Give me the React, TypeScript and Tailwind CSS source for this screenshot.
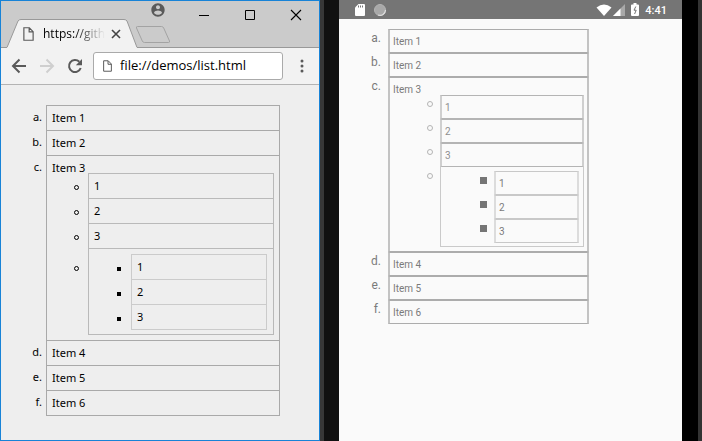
import type { ReactNode } from "react";

type Entry = { marker: string; label: string };

const before: Entry[] = [
  { marker: "a.", label: "Item 1" },
  { marker: "b.", label: "Item 2" },
];
const after: Entry[] = [
  { marker: "d.", label: "Item 4" },
  { marker: "e.", label: "Item 5" },
  { marker: "f.", label: "Item 6" },
];
const numbers = ["1", "2", "3"];

function PageIcon({ className }: { className: string }) {
  return (
    <svg viewBox="0 0 10 13" className={className} fill="none" stroke="#5a5a5a" strokeWidth="1.1">
      <path d="M.7.7h5.1l3.5 3.6v8H.7zM5.6.9v3.7h3.6" />
    </svg>
  );
}

function WindowButton({ label, top, children }: { label: string; top: string; children: ReactNode }) {
  return (
    <button type="button" aria-label={label} className={`flex w-[46px] justify-center ${top}`}>
      {children}
    </button>
  );
}

function TitleBar() {
  return (
    <header className="h-[47px] border-b border-[#999] bg-[#cbcbcb]">
      <div className="flex h-6 items-start justify-end">
        <WindowButton label="Profile" top="pt-px">
          <svg viewBox="0 0 24 24" className="size-4" fill="#5a5a5a">
            <path d="M12 2C6.48 2 2 6.48 2 12s4.480 10 10 10 10-4.480 10-10S17.520 2 12 2zm0 3c1.660 0 3 1.340 3 3s-1.340 3-3 3-3-1.340-3-3 1.340-3 3-3zm0 14.200c-2.500 0-4.710-1.280-6-3.220.03-1.990 4-3.080 6-3.080 1.990 0 5.970 1.090 6 3.080-1.290 1.940-3.500 3.220-6 3.220z" />
          </svg>
        </WindowButton>
        <WindowButton label="Minimize" top="pt-2">
          <svg viewBox="0 0 12 12" className="size-3" stroke="#000">
            <path d="M1 6.500h10" />
          </svg>
        </WindowButton>
        <WindowButton label="Maximize" top="pt-2">
          <svg viewBox="0 0 12 12" className="size-3" fill="none" stroke="#000">
            <path d="M1.500 1.500h9v9h-9z" />
          </svg>
        </WindowButton>
        <WindowButton label="Close window" top="pt-2">
          <svg viewBox="0 0 12 12" className="size-3" stroke="#000" strokeWidth="1.100">
            <path d="M1 1l10 10M11 1L1 11" />
          </svg>
        </WindowButton>
      </div>
      <div className="-mt-1.5 flex pl-1">
        <div className="relative flex h-[29px] w-[134px] items-center pl-[18px]">
          <svg viewBox="0 0 134 29" className="absolute inset-0 size-full" fill="#f2f2f2">
            <path d="M0 28.500h2L13 2q1-1.500 3-1.500h103q2 0 3 1.500l10 26.500h2V29H0z" />
            <path d="M0 28.500h2L13 2q1-1.500 3-1.500h103q2 0 3 1.500l10 26.500h2" fill="none" stroke="#999" />
            <path d="M2.500 28h129v1h-129z" />
          </svg>
          <PageIcon className="relative h-[14px] w-[11px]" />
          <span className="relative ml-[9px] w-[62px] overflow-hidden bg-linear-to-r from-black from-50% to-transparent bg-clip-text font-['Open_Sans',sans-serif] text-xs whitespace-nowrap text-transparent">
            https://gith
          </span>
          <button type="button" aria-label="Close tab" className="relative ml-[6px]">
            <svg viewBox="0 0 10 10" className="size-[10px]" stroke="#444" strokeWidth="1.600">
              <path d="M1 1l8 8M9 1L1 9" />
            </svg>
          </button>
        </div>
        <button type="button" aria-label="New tab" className="-ml-[5px] mt-[7px] h-[18px]">
          <svg viewBox="0 0 38 18" className="h-[18px] w-[38px]" fill="none" stroke="#a3a3a3">
            <path d="M3.500.5h24q1.500 0 2.200 1.500l5.800 13q.5 1.500-1 1.500H10.500q-1.500 0-2.200-1.500L2.500 2q-.5-1.500 1-1.500z" />
          </svg>
        </button>
      </div>
    </header>
  );
}

function Toolbar() {
  return (
    <nav className="flex h-[37px] items-center border-b border-[#b3b3b3] bg-[#f2f2f2] pr-[14px] pl-[10px]">
      <button type="button" aria-label="Back">
        <svg viewBox="0 0 16 16" className="size-4" fill="none" stroke="#5a5a5a" strokeWidth="2">
          <path d="M15 8H2.500M8.500 1.500L2 8l6.500 6.500" />
        </svg>
      </button>
      <button type="button" aria-label="Forward" className="ml-3">
        <svg viewBox="0 0 16 16" className="size-4" fill="none" stroke="#cfcfcf" strokeWidth="2">
          <path d="M1 8h12.500M7.500 1.500L14 8l-6.500 6.500" />
        </svg>
      </button>
      <button type="button" aria-label="Reload" className="ml-3">
        <svg viewBox="0 0 16 16" className="size-4" fill="none" stroke="#5a5a5a" strokeWidth="2">
          <path d="M13.700 10A6 6 0 1 1 12.300 3.800" />
          <path d="M15 1v6.200H8.800z" fill="#5a5a5a" stroke="none" />
        </svg>
      </button>
      <div className="ml-[10px] flex h-7 min-w-0 flex-1 items-center rounded-[3px] border border-[#aaa] bg-white pl-[9px]">
        <PageIcon className="h-3 w-[9px] shrink-0" />
        <input
          aria-label="Address"
          defaultValue="file://demos/list.html"
          className="ml-2 w-full min-w-0 bg-transparent font-['Open_Sans',sans-serif] text-[13px] text-black outline-none"
        />
      </div>
      <button type="button" aria-label="Menu" className="ml-4">
        <svg viewBox="0 0 6 14" className="h-[14px] w-[6px]" fill="#5a5a5a">
          <circle cx="3" cy="2" r="1.500" />
          <circle cx="3" cy="7" r="1.500" />
          <circle cx="3" cy="12" r="1.500" />
        </svg>
      </button>
    </nav>
  );
}

function DesktopRow({ marker, label }: Entry) {
  return (
    <li className="flex">
      <span className="w-[42px] shrink-0 pr-1 text-right">{marker}</span>
      <div className="flex-1 border-x border-t border-[#a9a9a9] pl-[5px]">{label}</div>
    </li>
  );
}

function DesktopList() {
  return (
    <ol className="font-['Noto_Sans',sans-serif] text-[11px] leading-6 text-black">
      {before.map((e) => (
        <DesktopRow key={e.marker} {...e} />
      ))}
      <li className="flex">
        <span className="w-[42px] shrink-0 pr-1 text-right">c.</span>
        <div className="flex-1 border-x border-t border-[#a9a9a9] pr-[5px] pb-[5px]">
          <p className="-mb-[7px] pl-[5px]">Item 3</p>
          <ul>
            {numbers.map((n) => (
              <li key={n} className="flex">
                <span className="flex w-[41px] shrink-0 items-center justify-end pt-1 pr-[9px]">
                  <i className="size-[5px] rounded-full border border-black" />
                </span>
                <div className="flex-1 border-x border-t border-[#b9b9b9] pl-[5px]">{n}</div>
              </li>
            ))}
            <li className="flex">
              <span className="flex h-9 w-[41px] shrink-0 items-center justify-end pt-1 pr-[9px]">
                <i className="size-[5px] rounded-full border border-black" />
              </span>
              <div className="flex-1 border border-[#b9b9b9] pt-[5px] pr-[6px] pb-1">
                <ul>
                  {numbers.map((n) => (
                    <li key={n} className="group flex">
                      <span className="flex w-[42px] shrink-0 items-center justify-end pt-1 pr-[10px]">
                        <i className="size-1 bg-black" />
                      </span>
                      <div className="flex-1 border-x border-t border-[#cbcbcb] pl-[5px] group-last:border-b">{n}</div>
                    </li>
                  ))}
                </ul>
              </div>
            </li>
          </ul>
        </div>
      </li>
      {after.map((e) => (
        <DesktopRow key={e.marker} {...e} />
      ))}
      <li aria-hidden="true" className="ml-[42px] h-px bg-[#a9a9a9]" />
    </ol>
  );
}

function StatusBar() {
  return (
    <div className="flex h-[19px] items-center bg-[#757575] px-[15px]">
      <svg viewBox="0 0 12 14" className="h-[14px] w-3" fill="#fff">
        <path d="M4.500 1H10q1 0 1 1v10q0 1-1 1H2q-1 0-1-1V4.500z" />
        <path d="M4.500 2.500v2M6.500 2.500v2M8.500 2.500v2" stroke="#757575" />
      </svg>
      <svg viewBox="0 0 14 14" className="ml-[7px] size-[14px]">
        <circle cx="7" cy="7" r="5.500" fill="#a8a8a8" stroke="#b4b4b4" />
        <path d="M12.500 7A5.500 5.500 0 0 1 5 12" fill="none" stroke="#ddd" strokeWidth="1.200" />
      </svg>
      <svg viewBox="0 0 16 12" className="ml-auto h-3 w-4" fill="#fff">
        <path d="M.5 3.500Q8-2.500 15.500 3.500L8 12z" />
      </svg>
      <svg viewBox="0 0 12 12" className="ml-px size-3">
        <path d="M12 0v12H0z" fill="#a8a8a8" />
        <path d="M7.500 4.500V12H0z" fill="#fff" />
      </svg>
      <svg viewBox="0 0 8 13" className="ml-[6px] h-[13px] w-2">
        <path d="M2.500 0h3v1.500H7q1 0 1 1V12q0 1-1 1H1q-1 0-1-1V2.500q0-1 1-1h1.500z" fill="#fff" />
        <path d="M4.800 3.500L3 7.200h2.200L3.600 11" fill="none" stroke="#757575" />
      </svg>
      <time className="ml-[6px] pt-[2px] font-[Roboto,sans-serif] text-[11px] leading-4 font-medium text-white">
        4:41
      </time>
    </div>
  );
}

function PhoneRow({ marker, label }: Entry) {
  return (
    <li className="flex h-6">
      <span className="w-[49px] shrink-0 pr-[7px] text-right text-xs leading-[18px]">{marker}</span>
      <div className="flex-1 border-x-2 border-y border-x-[#c3c3c3] border-y-[#acacac] pl-[3px]">{label}</div>
    </li>
  );
}

function PhoneList() {
  return (
    <ol className="font-[Roboto,sans-serif] text-[10px] leading-6 text-[#7a7a7a]">
      {before.map((e) => (
        <PhoneRow key={e.marker} {...e} />
      ))}
      <li className="flex">
        <span className="w-[49px] shrink-0 pr-[7px] text-right text-xs leading-[18px]">c.</span>
        <div className="flex-1 border-x-2 border-y border-x-[#c3c3c3] border-y-[#acacac] pr-[3px] pb-1">
          <p className="-mb-[7px] pl-[3px]">Item 3</p>
          <ul>
            {numbers.map((n) => (
              <li key={n} className="flex h-6">
                <span className="flex h-[18px] w-[50px] shrink-0 items-center justify-end pr-[7px]">
                  <i className="size-[6px] rounded-full border border-[#b4b4b4]" />
                </span>
                <div className="flex-1 border-x-2 border-y border-x-[#cfcfcf] border-y-[#b4b4b4] pl-[3px] text-[#8f8f8f]">
                  {n}
                </div>
              </li>
            ))}
            <li className="flex">
              <span className="flex h-[18px] w-[50px] shrink-0 items-center justify-end pr-[7px]">
                <i className="size-[6px] rounded-full border border-[#b4b4b4]" />
              </span>
              <div className="flex-1 border-x border-b border-[#cacaca] pt-1 pr-1 pb-[3px]">
                <ul>
                  {numbers.map((n) => (
                    <li key={n} className="flex h-6">
                      <span className="flex h-[18px] w-[53px] shrink-0 items-center justify-end pr-[7px]">
                        <i className="size-[7px] bg-[#757575]" />
                      </span>
                      <div className="flex-1 border-x-2 border-y border-x-[#dcdcdc] border-y-[#c8c8c8] pl-[3px]">{n}</div>
                    </li>
                  ))}
                </ul>
              </div>
            </li>
          </ul>
        </div>
      </li>
      {after.map((e) => (
        <PhoneRow key={e.marker} {...e} />
      ))}
    </ol>
  );
}

export default function App() {
  return (
    <div className="flex min-h-screen bg-black">
      <section className="w-80 shrink-0 border border-[#1883d7] bg-[#eee]">
        <TitleBar />
        <Toolbar />
        <main className="pt-5 pr-[39px] pl-[3px]">
          <DesktopList />
        </main>
      </section>
      <div className="w-[19px] shrink-0 border-l-4 border-[#383838] bg-[#111]" />
      <section className="min-w-0 flex-1 bg-[#fafafa]">
        <StatusBar />
        <div className="pt-[10px] pr-[93px]">
          <PhoneList />
        </div>
      </section>
      <div className="w-5 shrink-0 border-r-4 border-[#333] bg-black" />
    </div>
  );
}
